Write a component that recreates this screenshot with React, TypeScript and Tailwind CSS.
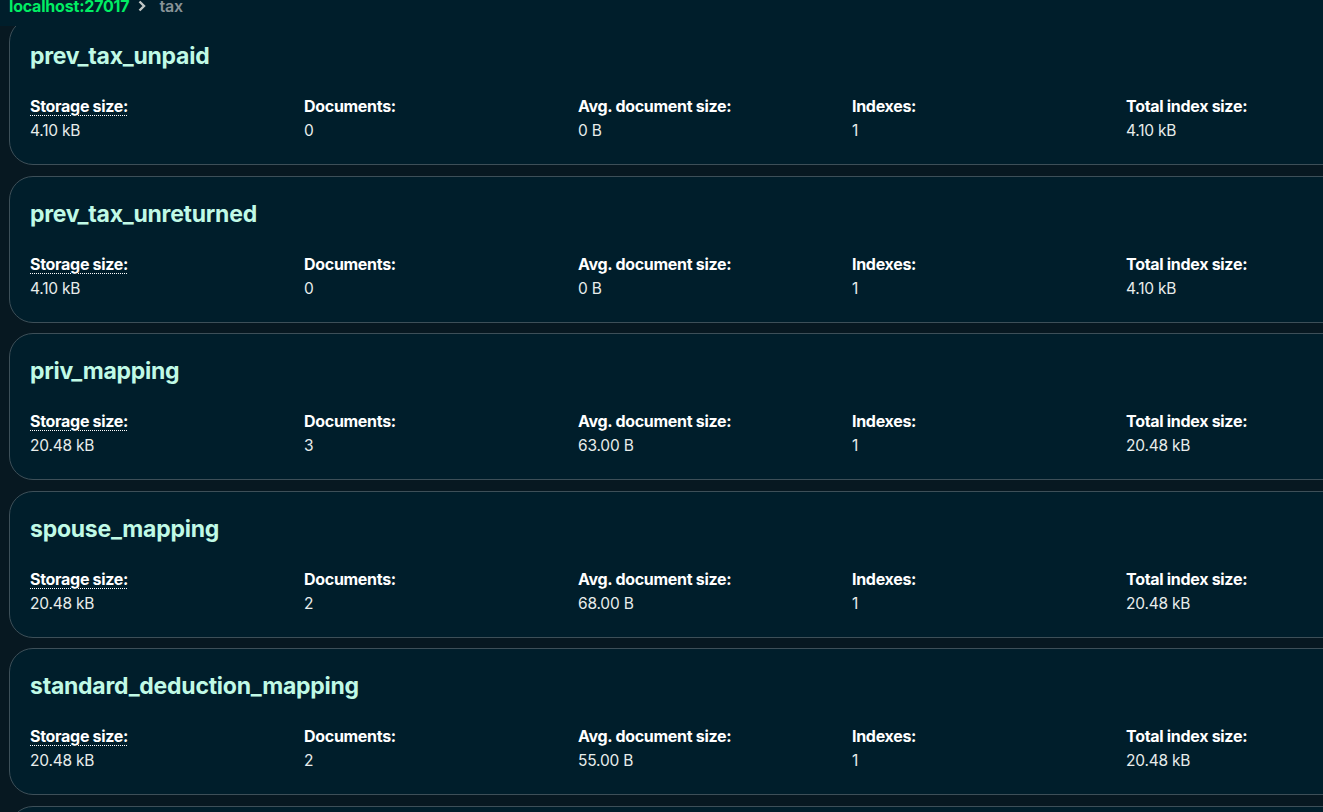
import React from "react";

const collections = [
	{ name: "prev_tax_unpaid", storage: "4.10 kB", docs: "0", avg: "0 B", indexes: "1", indexSize: "4.10 kB" },
	{ name: "prev_tax_unreturned", storage: "4.10 kB", docs: "0", avg: "0 B", indexes: "1", indexSize: "4.10 kB" },
	{ name: "priv_mapping", storage: "20.48 kB", docs: "3", avg: "63.00 B", indexes: "1", indexSize: "20.48 kB" },
	{ name: "spouse_mapping", storage: "20.48 kB", docs: "2", avg: "68.00 B", indexes: "1", indexSize: "20.48 kB" },
	{ name: "standard_deduction_mapping", storage: "20.48 kB", docs: "2", avg: "55.00 B", indexes: "1", indexSize: "20.48 kB" },
	{ name: "", storage: "", docs: "", avg: "", indexes: "", indexSize: "" },
];

function Stat({ label, value, dotted }: { label: string; value: string; dotted?: boolean }) {
	return (
		<div className="flex flex-col gap-[5px]">
			<div
				className={
					"text-[16px] leading-[20px] font-bold text-white tracking-[-0.3px] " +
					(dotted ? "underline decoration-dotted decoration-1 underline-offset-[3px]" : "")
				}
			>
				{label}
			</div>
			<div className="text-[15.5px] leading-[20px] text-[#E8EDEB] tracking-[-0.2px]">{value}</div>
		</div>
	);
}

function CollectionCard({ c }: { c: (typeof collections)[number] }) {
	return (
		<div className="ml-[9px] w-[1400px] h-[147px] shrink-0 rounded-[24px] border border-[#3d4f58] bg-[#001E2B] pl-[20px] pt-[23px]">
			<h2 className="text-[23px] leading-[28px] font-bold text-[#C0FAE6] tracking-[-0.25px]">{c.name}</h2>
			{c.name && (
				<div className="mt-[26px] grid grid-cols-[repeat(5,274px)]">
					<Stat label="Storage size:" value={c.storage} dotted />
					<Stat label="Documents:" value={c.docs} />
					<Stat label="Avg. document size:" value={c.avg} />
					<Stat label="Indexes:" value={c.indexes} />
					<Stat label="Total index size:" value={c.indexSize} />
				</div>
			)}
		</div>
	);
}

export default function App() {
	return (
		<div
			className="flex flex-col w-screen h-screen overflow-hidden bg-[#071821]"
			style={{ fontFamily: "Inter, 'Noto Sans', sans-serif" }}
		>
			<header className="relative z-10 h-[26px] shrink-0 bg-[#001E2B] pl-[9px]">
				<div className="flex items-center -mt-[4px] text-[16px] leading-[20px] font-bold tracking-[-0.2px]">
					<span className="text-[#00ED64]">localhost:27017</span>
					<svg className="ml-[8px] mr-[12px]" width="10" height="12" viewBox="0 0 10 12" fill="none">
						<path d="M2.5 1.5 L7 6 L2.5 10.5" stroke="#C1C7C6" strokeWidth="2.4" />
					</svg>
					<span className="text-[#889397] font-semibold">tax</span>
				</div>
			</header>
			<div className="flex flex-col gap-[10.5px] -mt-[8px]">
				{collections.map((c, i) => (
					<CollectionCard key={i} c={c} />
				))}
			</div>
		</div>
	);
}
